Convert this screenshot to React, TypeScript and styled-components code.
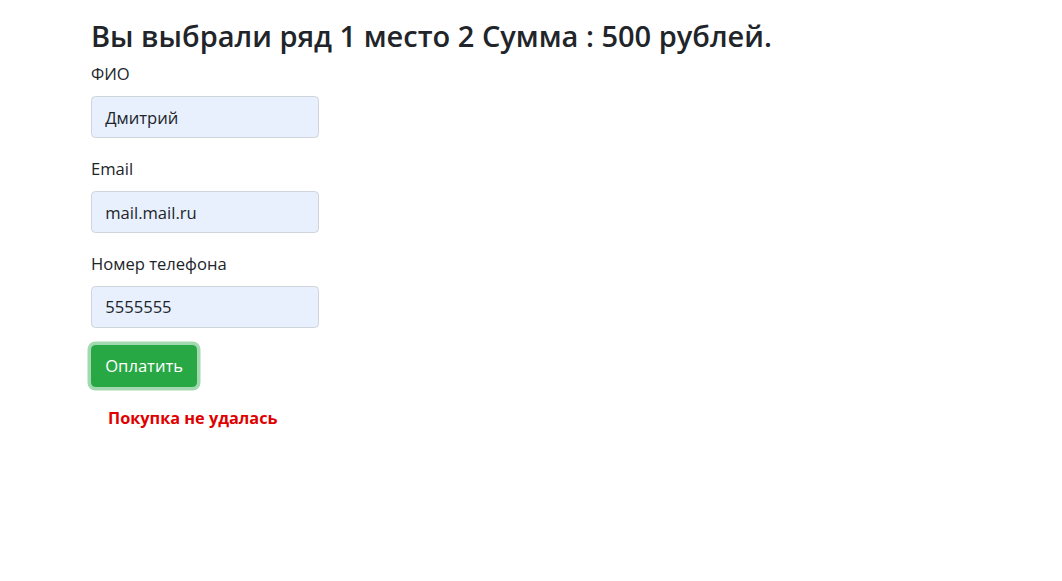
import React from "react";
import styled, { createGlobalStyle } from "styled-components";

const Global = createGlobalStyle`
  html, body { margin: 0; padding: 0; background: #fff; }
  body {
    font-family: "Open Sans", "Noto Sans", "Liberation Sans", sans-serif;
    color: #212529;
    font-size: 16.6px;
    line-height: 26.4px;
  }
  * { box-sizing: border-box; }
`;

const Page = styled.div`
  padding: 17px 0 0 91px;
`;

const Title = styled.h3`
  margin: 0 0 7px;
  font-size: 29px;
  font-weight: 600;
  line-height: 37px;
  color: #212529;
`;

const Form = styled.form`
  display: flex;
  flex-direction: column;
  align-items: flex-start;
`;

const Group = styled.div`
  display: flex;
  flex-direction: column;
  margin-bottom: 17.6px;
`;

const Label = styled.label`
  display: block;
  margin-bottom: 8.8px;
  font-size: 16.6px;
  line-height: 26.4px;
  color: #212529;
`;

const Input = styled.input`
  width: 228px;
  height: 42px;
  padding: 6.6px 13.2px;
  border: 1.1px solid #ced4da;
  border-radius: 4.4px;
  background: #e8f0fe;
  font-family: inherit;
  font-size: 16.6px;
  color: #212529;
  outline: none;
`;

const PayButton = styled.button`
  height: 42px;
  padding: 6.6px 13.2px;
  border: 1.1px solid #28a745;
  border-radius: 4.4px;
  background: #28a745;
  color: #fff;
  font-family: inherit;
  font-size: 16.6px;
  line-height: 26.4px;
  box-shadow: 0 0 0 3.5px rgba(72, 180, 97, 0.5);
  cursor: pointer;
`;

const ErrorText = styled.div`
  margin-top: 18px;
  padding-left: 17px;
  color: #e00000;
  font-weight: 700;
  font-size: 16.3px;
  line-height: 26.4px;
`;

export default function App() {
  return (
    <>
      <Global />
      <Page>
        <Title>Вы выбрали ряд 1 место 2 Сумма : 500 рублей.</Title>
        <Form onSubmit={(e) => e.preventDefault()}>
          <Group>
            <Label>ФИО</Label>
            <Input defaultValue="Дмитрий" />
          </Group>
          <Group>
            <Label>Email</Label>
            <Input defaultValue="mail.mail.ru" />
          </Group>
          <Group>
            <Label>Номер телефона</Label>
            <Input defaultValue="5555555" />
          </Group>
          <PayButton type="submit">Оплатить</PayButton>
        </Form>
        <ErrorText>Покупка не удалась</ErrorText>
      </Page>
    </>
  );
}
